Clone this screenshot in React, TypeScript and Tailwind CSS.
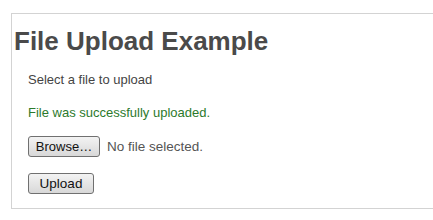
export default function App() {
  return (
    <div className="min-h-[220px] bg-white pl-[11px] pt-[13px] font-['Liberation_Sans',Arial,sans-serif]">
      <div className="border-y border-l border-[#d3d3d3] pb-[14px] pl-[16px] pt-[12px]">
        <h1 className="-ml-[14px] text-[26px] font-bold leading-[30px] text-[#4a4a4a]">File Upload Example</h1>
        <p className="mt-[16px] text-[13px] leading-[16px] text-[#444]">Select a file to upload</p>
        <p className="mt-[17px] text-[13px] leading-[16px] text-[#2c7a2c]">File was successfully uploaded.</p>
        <div className="mt-[15px] flex items-center gap-[7px]">
          <button
            type="button"
            className="h-[21px] w-[72px] rounded-[3px] border border-[#707070] bg-gradient-to-b from-[#f3f3f3] to-[#d8d8d8] text-[13px] leading-[19px] text-[#111]"
          >
            Browse…
          </button>
          <span className="text-[13.5px] leading-[16px] text-[#555]">No file selected.</span>
        </div>
        <button
          type="button"
          className="mt-[16px] block h-[21px] w-[66px] rounded-[3px] border border-[#707070] bg-gradient-to-b from-[#f3f3f3] to-[#d8d8d8] text-[13.5px] leading-[19px] text-[#111]"
        >
          Upload
        </button>
      </div>
    </div>
  );
}
